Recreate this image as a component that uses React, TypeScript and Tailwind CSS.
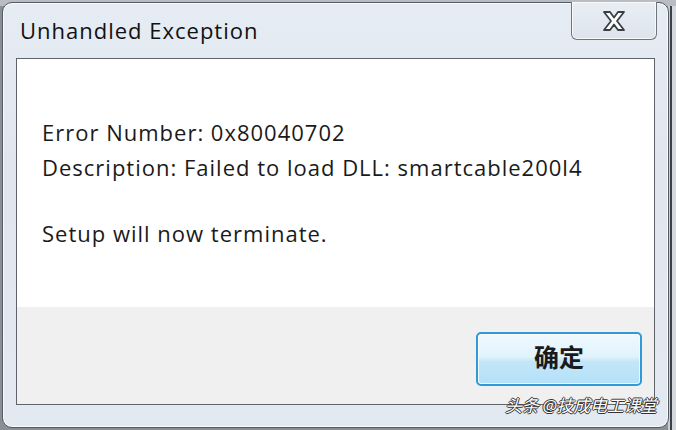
import React from "react";

export default function App() {
  return (
    <div className="w-[676px] h-[430px] overflow-hidden bg-[#8a8f96] relative" style={{ fontFamily: '"Open Sans", "Noto Sans", "Noto Sans CJK SC", sans-serif' }}>
      {/* background stripes at right edge */}
      <div className="absolute right-0 top-0 h-full w-[8px] bg-[linear-gradient(90deg,#c9ccd0_0,#c9ccd0_2px,#3c4048_2px,#3c4048_4px,#d5d8dc_4px)]" />
      <div className="absolute left-0 top-0 w-full h-[6px] bg-[#b9bdc3]" />
      {/* window */}
      <div className="absolute left-[2px] top-[2px] w-[667px] h-[426px] rounded-[10px] border border-[#555b63] bg-[linear-gradient(180deg,#e6ecf3_0%,#dfe6ee_40%,#e3e9f0_100%)] shadow-[inset_0_0_0_1px_rgba(255,255,255,0.8)] flex flex-col">
        {/* title bar */}
        <div className="h-[55px] flex items-start relative">
          <div className="pl-[17px] pt-[12px] text-[22px] leading-[30px] tracking-[1px] text-[#111]">Unhandled Exception</div>
          <div className="absolute right-[11px] top-[-1px] w-[86px] h-[38px] rounded-b-[6px] border border-t-0 border-[#6f757d] bg-[linear-gradient(180deg,#e9eef4_0%,#dde4ec_100%)] shadow-[inset_0_0_0_1px_rgba(255,255,255,0.7)] flex items-center justify-center">
            <svg width="26" height="22" viewBox="0 0 26 22">
              <path d="M3 2 H9 L13 7.5 L17 2 H23 L16 11 L23 20 H17 L13 14.5 L9 20 H3 L10 11 Z" fill="#fff" stroke="#3a3f46" strokeWidth="1.8" strokeLinejoin="round" />
            </svg>
          </div>
        </div>
        {/* content panel */}
        <div className="mx-[13px] h-[347px] border border-[#5f646b] flex flex-col">
          <div className="h-[248px] bg-white pl-[25px] pt-[56px] text-[22px] leading-[35px] tracking-[1px] text-[#1a1a1a]">
            <div>Error Number: 0x80040702</div>
            <div>Description: Failed to load DLL: smartcable200l4</div>
            <div className="mt-[31px]">Setup will now terminate.</div>
          </div>
          <div className="flex-1 bg-[#f0f0f0] flex justify-end items-start pt-[25px] pr-[12px]">
            <button className="w-[166px] h-[54px] rounded-[5px] border-2 border-[#2f9ad6] bg-[linear-gradient(180deg,#eef8fe_0%,#e2f3fc_45%,#c3e6f9_55%,#b4e0f8_100%)] shadow-[inset_0_0_0_1px_rgba(255,255,255,0.8)] text-[25px] font-semibold text-[#1a1a1a] flex items-center justify-center pb-[2px]">
              确定
            </button>
          </div>
        </div>
      </div>
      {/* watermark */}
      <div className="absolute left-[505px] top-[394px] text-[17px] leading-[24px] italic text-white tracking-[-0.3px] [text-shadow:1px_0_0_#333,-1px_0_0_#333,0_1px_0_#333,0_-1px_0_#333]">
        头条 @技成电工课堂
      </div>
    </div>
  );
}
